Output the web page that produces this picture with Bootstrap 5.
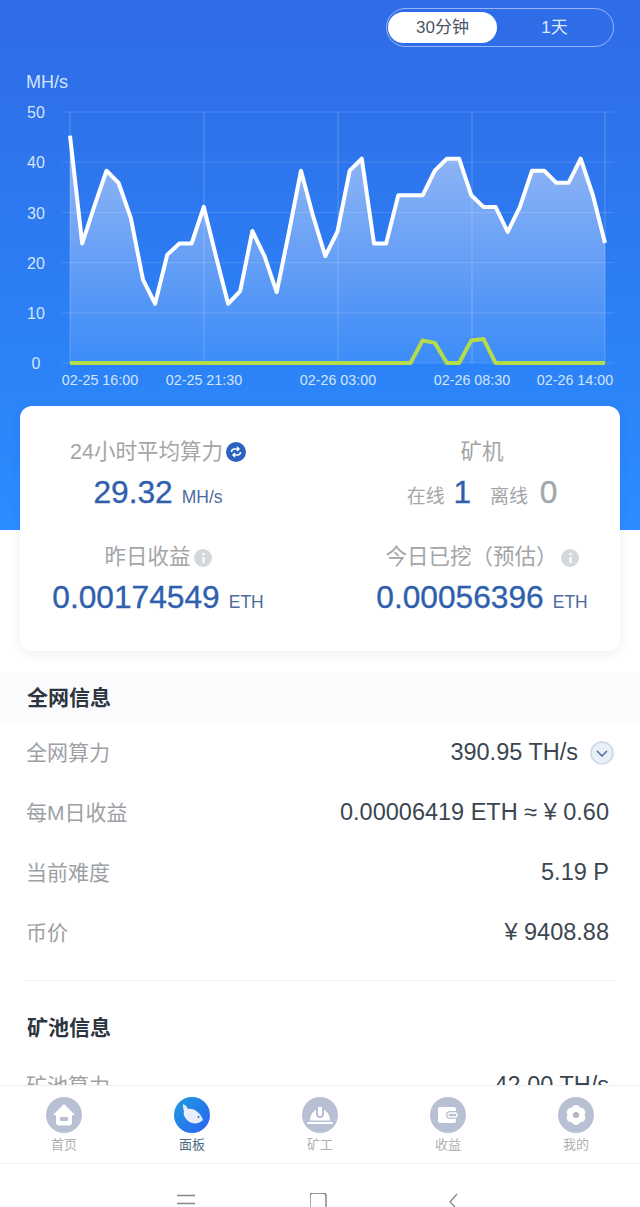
<!DOCTYPE html>
<html lang="zh-CN">
<head>
  <meta charset="UTF-8">
  <title>面板</title>
  <meta name="viewport" content="width=device-width, initial-scale=1">
  <link href="https://cdn.jsdelivr.net/npm/bootstrap@5.3.3/dist/css/bootstrap.min.css" rel="stylesheet">
  <style>
    body {
      font-family: "Liberation Sans", "Noto Sans CJK SC", sans-serif;
      background: #fff;
    }
    .screen { width: 640px; height: 1207px; overflow: hidden; }
    .scroll-area { flex: 1 1 0; min-height: 0; overflow: hidden; }

    .hero {
      height: 530px;
      padding-top: 8px;
      background: linear-gradient(to bottom, #2f6be6, #2a8dff);
    }
    .range-toggle {
      width: 228px;
      height: 39px;
      margin: 0 26px 13px auto;
      padding: 3px 1px;
      border: 1px solid rgba(255, 255, 255, .5);
      border-radius: 20px;
    }
    .range-toggle span {
      width: 109px;
      line-height: 31px;
      border-radius: 16px;
      text-align: center;
      font-size: 17px;
      color: #dfeaff;
    }
    .range-toggle .range-on { background: #fff; color: #4a5666; }
    .chart { display: block; }
    .chart text { fill: #d3e4fb; font-size: 16px; }
    .chart .x-label { font-size: 14.3px; text-anchor: middle; }
    .chart .y-label { text-anchor: middle; }
    .chart .unit-label { font-size: 18px; }

    .stat-card {
      margin: -124px 20px 21px;
      height: 245px;
      padding-top: 32px;
      background: #fff;
      border-radius: 12px;
      box-shadow: 0 3px 12px rgba(40, 60, 100, .08);
      text-align: center;
    }
    .stat-label { font-size: 21.5px; line-height: 28px; color: #a3a5a7; }
    .stat-value { font-size: 31.7px; line-height: 40px; margin-top: 6px; color: #2f5fad; white-space: nowrap; -webkit-text-stroke: .35px #2f5fad; }
    .stat-unit { font-size: 17.5px; color: #4d6c9c; margin-left: 9px; -webkit-text-stroke: 0; }
    .stat-sub { font-size: 19px; color: #a3a5a7; -webkit-text-stroke: 0; }
    .stat-sub-gap { margin-left: 10px; }
    .stat-off { color: #a3a5a7; -webkit-text-stroke: .35px #a3a5a7; margin-left: 3px; }
    .stat-gap { margin-top: 26px; }
    .tip-icon { vertical-align: -3px; margin-left: 3px; }

    .band-title { height: 51px; background: #fbfafc; padding-left: 27px; }
    .plain-title { height: 56px; padding-left: 27px; margin-top: 19px; }
    .band-title, .plain-title { font-size: 21px; font-weight: 600; color: #2d3540; }
    .info-row { height: 60px; padding: 0 31px 0 26px; font-size: 23.5px; color: #3b4651; flex-shrink: 0; }
    .info-row .info-name { font-size: 21px; color: #9da1a5; }
    .info-line { height: 1px; margin: 17px 26px 0; background: #f0f0f2; }
    .fold-icon { margin: 0 -5px 0 12px; }

    .tab-bar { height: 79px; background: #fff; border-top: 1px solid #f0f0f0; border-bottom: 1px solid #f0f0f0; flex-shrink: 0; padding-top: 11px; }
    .tab-item { width: 128px; text-align: center; font-size: 13px; line-height: 16px; color: #adb0b4; }
    .tab-item svg { display: block; margin: 0 auto 4px; }
    .tab-on { color: #4b6b86; }
    .sys-bar { height: 43px; background: #fff; flex-shrink: 0; padding-top: 29px; }
    .sys-key { width: 134px; }
    .sys-key svg { display: block; margin: 0 auto; }
  </style>
</head>
<body>
<div class="screen d-flex flex-column">
  <div class="scroll-area d-flex flex-column">
    <div class="hero flex-shrink-0">
      <div class="range-toggle d-flex">
        <span class="range-on">30分钟</span>
        <span class="flex-grow-1">1天</span>
      </div>
      <svg class="chart" id="chart" width="640" height="346" viewBox="0 60 640 346">
        <defs>
          <linearGradient id="areaFill" x1="0" y1="0" x2="0" y2="1">
            <stop offset="0" stop-color="#fff" stop-opacity=".5"/>
            <stop offset="1" stop-color="#fff" stop-opacity=".08"/>
          </linearGradient>
        </defs>
        <text class="unit-label" x="26" y="88">MH/s</text>
        <g id="grid"></g>
        <polygon id="hashArea" fill="url(#areaFill)"/>
        <polyline id="hashLine" fill="none" stroke="#fff" stroke-width="4" stroke-linejoin="round"/>
        <polyline id="rejectLine" fill="none" stroke="#b4dc4b" stroke-width="4" stroke-linejoin="round"/>
        <text class="y-label" x="36" y="118">50</text>
        <text class="y-label" x="36" y="168">40</text>
        <text class="y-label" x="36" y="219">30</text>
        <text class="y-label" x="36" y="269">20</text>
        <text class="y-label" x="36" y="319">10</text>
        <text class="y-label" x="36" y="369">0</text>
        <text class="x-label" x="100" y="385">02-25 16:00</text>
        <text class="x-label" x="204" y="385">02-25 21:30</text>
        <text class="x-label" x="338" y="385">02-26 03:00</text>
        <text class="x-label" x="472" y="385">02-26 08:30</text>
        <text class="x-label" x="575" y="385">02-26 14:00</text>
      </svg>
    </div>

    <div class="stat-card flex-shrink-0">
      <div class="row g-0">
        <div class="col-6 pe-4">
          <div class="stat-label">24小时平均算力<svg class="tip-icon" width="20" height="20" viewBox="0 0 20 20"><circle cx="10" cy="10" r="10" fill="#2b62bd"/><path d="M5.500 10a3 3 0 0 1 3-3h4M11 5l2 2-2 2M14.500 10a3 3 0 0 1-3 3h-4M9 15l-2-2 2-2" fill="none" stroke="#fff" stroke-width="1.500"/></svg></div>
          <div class="stat-value">29.32<span class="stat-unit">MH/s</span></div>
        </div>
        <div class="col-6 ps-4">
          <div class="stat-label">矿机</div>
          <div class="stat-value"><span class="stat-sub">在线</span> 1 <span class="stat-sub stat-sub-gap">离线</span> <span class="stat-off">0</span></div>
        </div>
      </div>
      <div class="row g-0 stat-gap">
        <div class="col-6 pe-4">
          <div class="stat-label">昨日收益<svg class="tip-icon" width="18" height="18" viewBox="0 0 18 18"><circle cx="9" cy="9" r="9" fill="#d4d7db"/><circle cx="9.500" cy="5" r="1.300" fill="#fff"/><path d="M9.500 8v6" stroke="#fff" stroke-width="2"/></svg></div>
          <div class="stat-value">0.00174549<span class="stat-unit">ETH</span></div>
        </div>
        <div class="col-6 ps-4">
          <div class="stat-label">今日已挖（预估）<svg class="tip-icon" width="18" height="18" viewBox="0 0 18 18"><circle cx="9" cy="9" r="9" fill="#d4d7db"/><circle cx="9.500" cy="5" r="1.300" fill="#fff"/><path d="M9.500 8v6" stroke="#fff" stroke-width="2"/></svg></div>
          <div class="stat-value">0.00056396<span class="stat-unit">ETH</span></div>
        </div>
      </div>
    </div>

    <div class="band-title d-flex align-items-center flex-shrink-0">全网信息</div>
    <div class="info-row d-flex justify-content-between align-items-center">
      <span class="info-name">全网算力</span>
      <span class="d-flex align-items-center">390.95 TH/s<svg class="fold-icon" width="24" height="24" viewBox="0 0 24 24"><circle cx="12" cy="12" r="11" fill="#e9eff9" stroke="#cdd5e6" stroke-width="1.500"/><path d="M7 10l5 5 5-5" fill="none" stroke="#4d6c9c" stroke-width="1.500"/></svg></span>
    </div>
    <div class="info-row d-flex justify-content-between align-items-center">
      <span class="info-name">每M日收益</span>
      <span>0.00006419 ETH ≈ ¥ 0.60</span>
    </div>
    <div class="info-row d-flex justify-content-between align-items-center">
      <span class="info-name">当前难度</span>
      <span>5.19 P</span>
    </div>
    <div class="info-row d-flex justify-content-between align-items-center">
      <span class="info-name">币价</span>
      <span>¥ 9408.88</span>
    </div>
    <div class="info-line flex-shrink-0"></div>
    <div class="plain-title d-flex align-items-center flex-shrink-0">矿池信息</div>
    <div class="info-row d-flex justify-content-between align-items-center">
      <span class="info-name">矿池算力</span>
      <span>42.00 TH/s</span>
    </div>
  </div>

  <div class="tab-bar d-flex">
    <div class="tab-item">
      <svg width="36" height="36" viewBox="0 0 36 36"><circle cx="18" cy="18" r="18" fill="#b9c0d3"/><path d="M18 7.500 8 17.500h2.500V26a2 2 0 0 0 2 2h11a2 2 0 0 0 2-2v-8.500H28z" fill="#fff" stroke="#fff" stroke-linejoin="round"/><rect x="14" y="20" width="8" height="4" rx="1" fill="#b9c0d3"/></svg>
      首页
    </div>
    <div class="tab-item tab-on">
      <svg width="36" height="36" viewBox="0 0 36 36"><defs><linearGradient id="fishFill" x1="0" y1="0" x2="1" y2="1"><stop offset="0" stop-color="#1f9be0"/><stop offset="1" stop-color="#2a62f0"/></linearGradient></defs><circle cx="18" cy="18" r="18" fill="url(#fishFill)"/><path d="M9 7c3 1 4 3 5 5 6-1 12 3 15 11-5 5-12 4-16 0-3-3-4-6-3-9-1-2-1-5-1-7z" fill="#e8eef8"/><circle cx="24.500" cy="20" r="1" fill="#2a62f0"/></svg>
      面板
    </div>
    <div class="tab-item">
      <svg width="36" height="36" viewBox="0 0 36 36"><circle cx="18" cy="18" r="18" fill="#b9c0d3"/><path d="M8 23.500a10 11.500 0 0 1 20 0z" fill="#fff"/><path d="M15 10v7a3 3 0 0 0 6 0v-7" fill="#fff" stroke="#b9c0d3" stroke-width="2"/><rect x="5" y="25" width="26" height="2" rx="1" fill="#fff"/></svg>
      矿工
    </div>
    <div class="tab-item">
      <svg width="36" height="36" viewBox="0 0 36 36"><circle cx="18" cy="18" r="18" fill="#b9c0d3"/><path d="M10 10h14a2 2 0 0 1 2 2v2h-6a4 4 0 0 0 0 8h6v2a2 2 0 0 1-2 2H10a2 2 0 0 1-2-2V12a2 2 0 0 1 2-2z" fill="#fff"/><rect x="18" y="16" width="9" height="4" rx="2" fill="none" stroke="#fff" stroke-width="1.300"/></svg>
      收益
    </div>
    <div class="tab-item">
      <svg width="36" height="36" viewBox="0 0 36 36"><circle cx="18" cy="18" r="18" fill="#b9c0d3"/><g fill="#fff"><circle cx="18" cy="12.500" r="4.500"/><circle cx="22.800" cy="15.300" r="4.500"/><circle cx="22.800" cy="20.700" r="4.500"/><circle cx="18" cy="23.500" r="4.500"/><circle cx="13.200" cy="20.700" r="4.500"/><circle cx="13.200" cy="15.300" r="4.500"/></g><circle cx="18" cy="18" r="3" fill="#b4b8c0"/></svg>
      我的
    </div>
  </div>
  <div class="sys-bar d-flex justify-content-center">
    <div class="sys-key"><svg width="20" height="14" viewBox="0 0 20 14"><path d="M1 2.500h18M1 10.500h18" stroke="#888" stroke-width="1.300"/></svg></div>
    <div class="sys-key"><svg width="20" height="14" viewBox="0 0 20 14"><path d="M0 14V3a3 3 0 0 1 3-3h10a3 3 0 0 1 3 3v11" fill="none" stroke="#777" stroke-width="1.300"/></svg></div>
    <div class="sys-key"><svg width="20" height="14" viewBox="0 0 20 14"><path d="M13 1 6 9l5 5" fill="none" stroke="#888" stroke-width="1.300"/></svg></div>
  </div>
</div>

<script src="https://cdn.jsdelivr.net/npm/bootstrap@5.3.3/dist/js/bootstrap.bundle.min.js"></script>
<script>
const hash = [45.3, 23.8, 31.2, 38.3, 35.9, 28.9, 16.6, 11.8, 21.6, 23.8, 23.8, 31.1, 21.3, 11.8, 14.3,
  26.3, 21.3, 14.1, 26, 38.3, 29.2, 21.3, 26.2, 38.3, 40.7, 23.8, 23.8, 33.4, 33.4, 33.4,
  38.3, 40.7, 40.7, 33.4, 31.1, 31.1, 26.1, 31.1, 38.3, 38.3, 35.9, 35.9, 40.7, 33.5, 23.9];
const rejected = hash.map(() => 0);
rejected[29] = 4.5; rejected[30] = 4; rejected[33] = 4.5; rejected[34] = 4.8;

const xAt = i => (70 + i * 535 / 44).toFixed(1);
const yAt = v => (363 - v * 5.02).toFixed(1);
const toPoints = list => list.map((v, i) => `${xAt(i)},${yAt(v)}`).join(" ");

document.getElementById("hashLine").setAttribute("points", toPoints(hash));
document.getElementById("rejectLine").setAttribute("points", toPoints(rejected));
document.getElementById("hashArea").setAttribute("points", `70,363 ${toPoints(hash)} 605,363`);

let lines = "";
[0, 10, 20, 30, 40, 50].forEach(v => {
  lines += `<path d="M62 ${yAt(v)}H614" stroke="#fff" stroke-opacity=".14"/>`;
});
[70, 204, 338, 472, 605].forEach(x => {
  lines += `<path d="M${x} 112V363" stroke="#fff" stroke-opacity=".22"/>`;
});
document.getElementById("grid").innerHTML = lines;
</script>
</body>
</html>
